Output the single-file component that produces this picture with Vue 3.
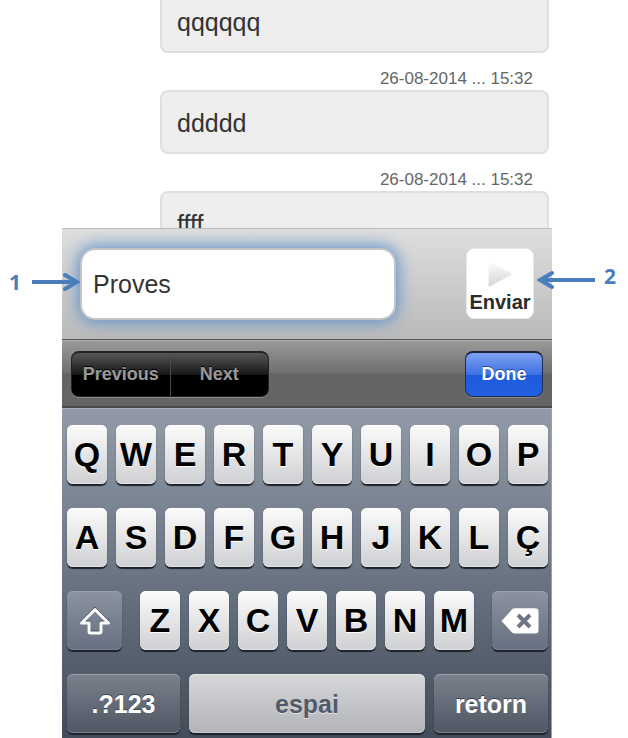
<script setup>
import { ref } from 'vue'

const draft = ref('Proves')

const messages = [
  { id: 1, text: 'qqqqqq', stamp: '' },
  { id: 2, text: 'ddddd', stamp: '26-08-2014 ... 15:32' },
  { id: 3, text: 'ffff', stamp: '26-08-2014 ... 15:32' },
]

const topRow = ['Q', 'W', 'E', 'R', 'T', 'Y', 'U', 'I', 'O', 'P']
const homeRow = ['A', 'S', 'D', 'F', 'G', 'H', 'J', 'K', 'L', 'Ç']
const bottomRow = ['Z', 'X', 'C', 'V', 'B', 'N', 'M']
</script>

<template>
  <div class="figure">
    <main class="phone">
      <section class="chat">
        <article v-for="m in messages" :key="m.id" class="message">
          <time v-if="m.stamp" class="stamp">{{ m.stamp }}</time>
          <p class="bubble">{{ m.text }}</p>
        </article>
      </section>

      <form class="composer" @submit.prevent>
        <input v-model="draft" class="draft" type="text" aria-label="Missatge" />
        <button class="send" type="submit">
          <svg class="send-icon" viewBox="0 0 24 28" aria-hidden="true">
            <defs>
              <linearGradient id="play" x1="0" y1="0" x2="0" y2="1">
                <stop offset="0" stop-color="#fcfcfc" />
                <stop offset="1" stop-color="#d6d6d6" />
              </linearGradient>
            </defs>
            <path d="M0.5 1.5 L23 13 Q24.500 14 23 15 L2 26.500 Q0.500 27 0.500 25.500 Z" fill="url(#play)" />
          </svg>
          <span>Enviar</span>
        </button>

        <div class="callout callout-left">
          <span>1</span>
          <svg class="arrow" viewBox="0 0 48 20" aria-hidden="true">
            <path d="M0 10 H44" stroke-width="4" />
            <path d="M33 3 L45 10 L33 17" stroke-width="4" stroke-linecap="round" />
          </svg>
        </div>
        <div class="callout callout-right">
          <svg class="arrow arrow-long" viewBox="0 0 58 20" aria-hidden="true">
            <path d="M4 10 H58" stroke-width="4" />
            <path d="M15 3 L3 10 L15 17" stroke-width="4" stroke-linecap="round" />
          </svg>
          <span>2</span>
        </div>
      </form>

      <div class="toolbar">
        <div class="segment">
          <button type="button">Previous</button>
          <button type="button">Next</button>
        </div>
        <button class="done" type="button">Done</button>
      </div>

      <div class="keyboard">
        <div class="row letters">
          <button v-for="k in topRow" :key="k" class="key" type="button">{{ k }}</button>
        </div>
        <div class="row letters">
          <button v-for="k in homeRow" :key="k" class="key" type="button">{{ k }}</button>
        </div>
        <div class="row row-shift">
          <button class="key dark" type="button" aria-label="Shift">
            <svg class="shift-icon" viewBox="0 0 32 28" aria-hidden="true">
              <path d="M16 2.500 L29.500 16 H22 V24.500 Q22 26 20.500 26 H11.500 Q10 26 10 24.500 V16 H2.500 Z" transform="translate(0 -1)" stroke="#4a515c" />
              <path d="M16 2.500 L29.500 16 H22 V24.500 Q22 26 20.500 26 H11.500 Q10 26 10 24.500 V16 H2.500 Z" stroke="#fff" />
            </svg>
          </button>
          <div class="row letters-short">
            <button v-for="k in bottomRow" :key="k" class="key" type="button">{{ k }}</button>
          </div>
          <button class="key dark" type="button" aria-label="Delete">
            <svg class="delete-icon" viewBox="0 0 38 26" aria-hidden="true">
              <path d="M0.500 13 L11 1.500 Q12 0.300 14 0.300 H34 Q37.500 0.300 37.500 3.500 V22 Q37.500 25.500 34 25.500 H14 Q12 25.500 11 24.500 Z" fill="#fff" />
              <path d="M17 7 L29 19 M29 7 L17 19" stroke="#6f7786" stroke-width="4" />
            </svg>
          </button>
        </div>
        <div class="row row-space">
          <button class="key dark word" type="button">.?123</button>
          <button class="key space word" type="button">espai</button>
          <button class="key dark word" type="button">retorn</button>
        </div>
      </div>
    </main>
  </div>
</template>

<style>
body {
  margin: 0;
  background: #fff;
}
</style>

<style scoped>
.figure {
  box-sizing: border-box;
  height: 100vh;
  padding: 0 76px 0 62px;
  font-family: "Liberation Sans", Arial, sans-serif;
}

.figure *,
.figure *::before {
  box-sizing: border-box;
}

button,
input {
  margin: 0;
  padding: 0;
  border: 0;
  font-family: inherit;
}

.phone {
  display: flex;
  flex-direction: column;
  height: 100%;
}

.chat {
  flex: 1;
  min-height: 0;
  overflow: hidden;
  padding: 0 3px 0 98px;
}

.message:first-child {
  margin-top: -11px;
}

.stamp {
  display: block;
  height: 37px;
  padding: 16px 16px 0 0;
  color: #666;
  font-size: 17px;
  line-height: 20px;
  text-align: right;
}

.bubble {
  height: 64px;
  margin: 0;
  padding: 0 15px;
  border: 2px solid #dfdfdf;
  border-radius: 8px;
  background: #eee;
  color: #333;
  font-size: 25px;
  line-height: 62px;
}

.composer {
  position: relative;
  display: flex;
  justify-content: space-between;
  align-items: flex-start;
  height: 111px;
  padding: 19px 18px;
  border-top: 1px solid #bdbdbd;
  background: linear-gradient(#dedede, #bababa);
}

.draft {
  flex: 0 1 316px;
  min-width: 0;
  height: 72px;
  padding: 0 11px;
  border: 2px solid #c4c4c4;
  border-radius: 15px;
  outline: none;
  background: #fff;
  box-shadow: 0 0 16px 2px #5d92cc;
  color: #333;
  font-size: 25px;
}

.send {
  display: flex;
  flex-direction: column;
  align-items: center;
  gap: 2px;
  width: 68px;
  height: 71px;
  padding-top: 11px;
  border: 1px solid #e8e8e8;
  border-radius: 8px;
  background: #fff;
  color: #2b2b2b;
  font-size: 20px;
  font-weight: bold;
  line-height: 24px;
}

.send-icon {
  width: 24px;
  height: 28px;
}

.callout {
  position: absolute;
  display: flex;
  align-items: center;
  color: #4a7ebb;
  font-family: "Open Sans", sans-serif;
  font-size: 21px;
  font-weight: bold;
  line-height: 20px;
}

.callout-left {
  top: 43px;
  right: calc(100% - 18px);
  gap: 11px;
}

.callout-right {
  top: 37px;
  left: calc(100% - 15px);
  gap: 9px;
}

.callout-right span {
  padding-bottom: 8px;
}

.arrow {
  width: 48px;
  height: 20px;
  fill: none;
  stroke: #4a7ebb;
}

.arrow-long {
  width: 58px;
}

.toolbar {
  display: flex;
  justify-content: space-between;
  align-items: flex-start;
  height: 69px;
  padding: 11px 9px;
  border-top: 1px solid #555;
  border-bottom: 2px solid #4b4b4b;
  background: linear-gradient(#9b9b9b, #6f6f6f 50%, #656565 51%, #656565);
  box-shadow: inset 0 1px #adadad;
}

.segment {
  display: flex;
  width: 198px;
  height: 46px;
  border: 1px solid #222;
  border-top: 2px solid #222;
  border-radius: 8px;
  background: linear-gradient(#575757, #171717 50%, #000 51%, #000);
  box-shadow: 0 1px #8a8a8a;
}

.segment button {
  flex: 1;
  background: none;
  color: #999;
  font-size: 18px;
  font-weight: bold;
  text-shadow: 0 -1px #000;
}

.segment button + button {
  border-left: 1px solid #4a4a4a;
}

.done {
  width: 78px;
  height: 46px;
  border: 1px solid #1b2c55;
  border-top: 2px solid #1b2338;
  border-radius: 8px;
  background: linear-gradient(#7ea2f2, #3f71e3 50%, #205bdd 51%, #205fe0);
  box-shadow: 0 1px #8a8a8a;
  color: #fff;
  font-size: 18px;
  font-weight: bold;
  text-shadow: 0 -1px #24479a;
}

.keyboard {
  display: flex;
  flex-direction: column;
  gap: 24px;
  padding: 17px 4px 5px 5px;
  background: linear-gradient(#929aa7, #6b7583 50%, #434c59);
  box-shadow: inset 0 1px #a9b0bb, inset -1px 0 #9aa1ac;
}

.row {
  display: grid;
  gap: 9px;
}

.letters {
  grid-template-columns: repeat(10, minmax(0, 1fr));
}

.letters-short {
  grid-template-columns: repeat(7, minmax(0, 1fr));
}

.row-shift {
  grid-template-columns: 55fr 334fr 56fr;
  gap: 18px;
}

.row-space {
  grid-template-columns: 113fr 236fr 114fr;
}

.key {
  display: flex;
  justify-content: center;
  align-items: center;
  min-width: 0;
  height: 59px;
  border-radius: 6px;
  background: linear-gradient(#fbfbfb, #cfd0d3);
  box-shadow: inset 0 1px #fff, inset 0 -1px #e4e4e6, 0 2px 1px #1c2028;
  color: #000;
  font-size: 34px;
  font-weight: bold;
  text-shadow: 0 1px #fff;
}

.dark {
  background: linear-gradient(#8b93a1, #677080);
  box-shadow: inset 0 1px #9aa1ac, inset 0 -1px #7b828f, 0 2px 1px #1c2028;
  color: #fff;
  text-shadow: 0 -1px #3a414c;
}

.word {
  padding-top: 2px;
  font-size: 25px;
}

.row-space .dark {
  background: linear-gradient(#7a818d, #4f5764);
}

.space {
  background: linear-gradient(#d5d7d9, #b3b4b8);
  box-shadow: inset 0 1px #e6e7e8, inset 0 -1px #c9cacc, 0 2px 1px #1c2028;
  color: #505a68;
  text-shadow: 0 1px #e6e6e8;
}

.shift-icon {
  width: 32px;
  height: 28px;
  fill: none;
  stroke-width: 3;
  stroke-linejoin: round;
}

.delete-icon {
  width: 38px;
  height: 26px;
}
</style>
